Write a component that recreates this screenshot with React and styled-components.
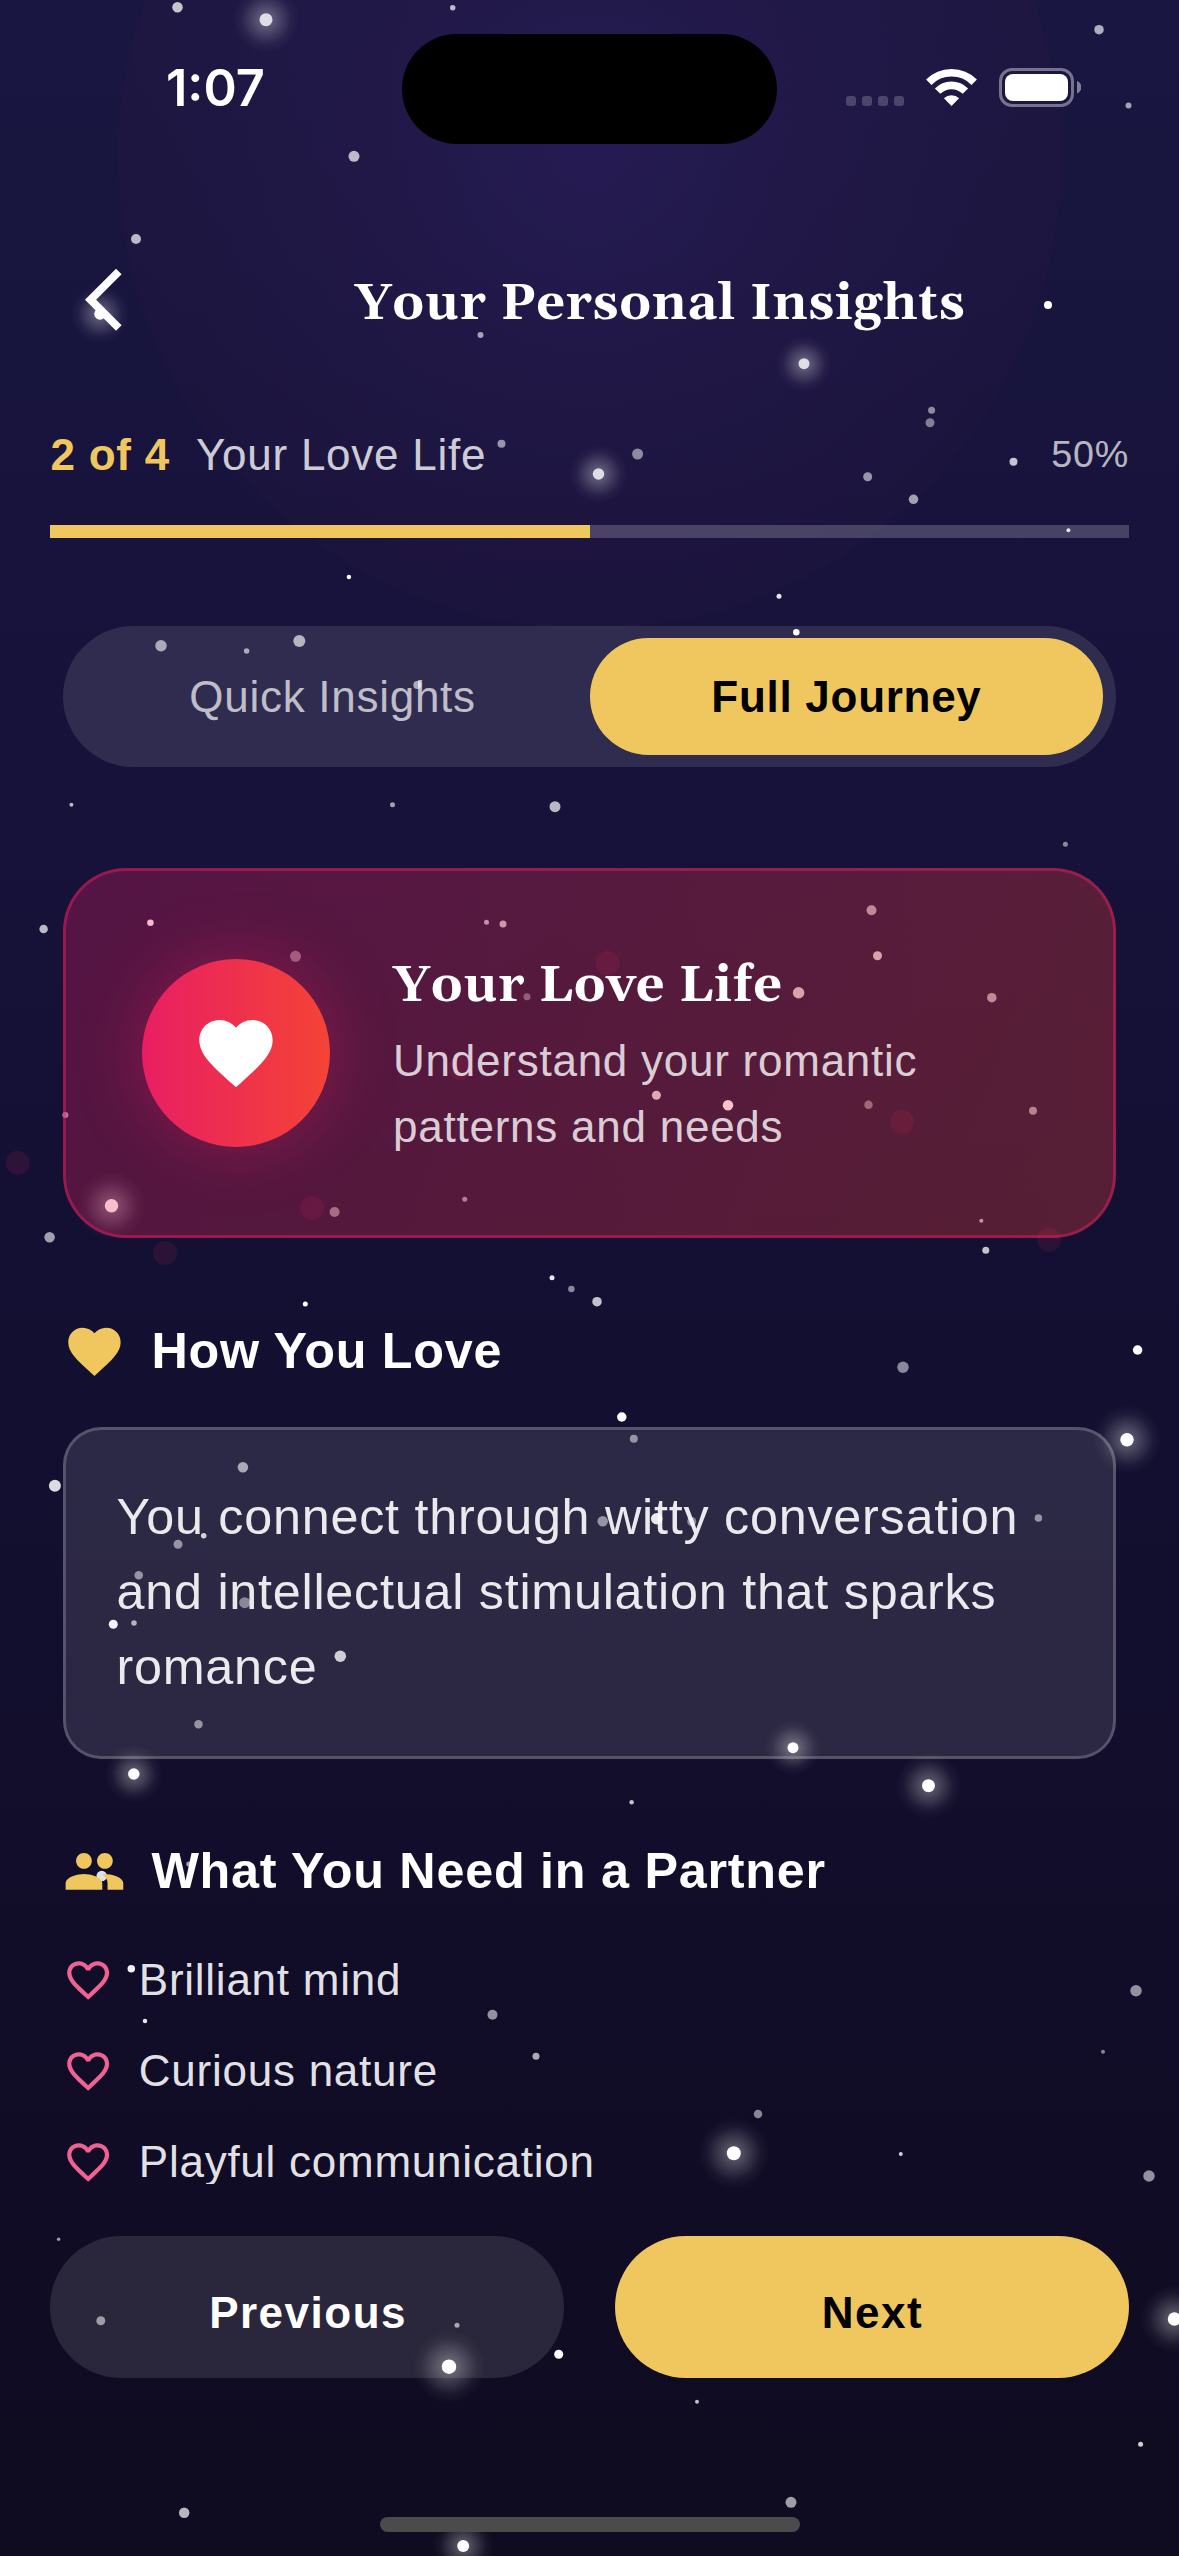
import React from "react";
import styled, { createGlobalStyle } from "styled-components";

const gold = "#f0c75e";
const sans = `"Liberation Sans", Arial, sans-serif`;
const serif = `Georgia, Gelasio, "Liberation Serif", serif`;

const GlobalStyle = createGlobalStyle`
  * { box-sizing: border-box; }
  html, body { margin: 0; padding: 0; background: #0f0b20; }
`;

const Screen = styled.div`
  position: relative;
  width: 1179px;
  height: 2556px;
  overflow: hidden;
  display: flex;
  flex-direction: column;
  font-family: ${sans};
  color: #fff;
  background:
    radial-gradient(circle 472px at 589.5px 158px, rgba(103, 58, 183, 0.16) 0%, rgba(115, 50, 140, 0.09) 50%, rgba(140, 45, 80, 0.035) 99.7%, transparent 100%),
    linear-gradient(180deg, #191641 0%, #16123a 30%, #120e2d 65%, #0f0b20 100%);
`;

const Sky = styled.svg`
  position: absolute;
  inset: 0;
  pointer-events: none;
`;

const Content = styled.div`
  position: relative;
  flex: 1;
  display: flex;
  flex-direction: column;
`;

const StatusBar = styled.div`
  height: 177px;
  padding: 34px 98px 0 166px;
  display: flex;
  align-items: flex-start;
  justify-content: space-between;
`;

const Clock = styled.div`
  width: 236px;
  padding-top: 23px;
  font-family: Inter, sans-serif;
  font-weight: 600;
  font-size: 50.5px;
  line-height: 62px;
  letter-spacing: 0;
`;

const Island = styled.div`
  width: 375px;
  height: 110px;
  border-radius: 55px;
  background: #000;
`;

const StatusIcons = styled.div`
  width: 236px;
  margin-left: 68px;
  padding-top: 34px;
  display: flex;
  align-items: flex-start;
`;

const Header = styled.div`
  height: 244px;
  padding-top: 1.5px;
  display: flex;
  align-items: center;
`;

const BackButton = styled.button`
  width: 141px;
  height: 76px;
  padding: 0 0 0 85px;
  border: 0;
  background: none;
  display: flex;
`;

const Title = styled.h1`
  flex: 1;
  margin: 8px 0 0;
  text-align: center;
  font-family: ${serif};
  font-weight: 700;
  font-size: 50.3px;
  line-height: 66px;
  letter-spacing: 0.75px;
`;

const ProgressRow = styled.div`
  height: 104px;
  padding: 8px 50px 0 50.5px;
  display: flex;
  align-items: flex-start;
  font-size: 44px;
  line-height: 51px;
  letter-spacing: 0.75px;
`;

const Step = styled.span`
  width: 145.5px;
  color: ${gold};
  font-weight: 700;
`;

const StepName = styled.span`
  flex: 1;
  color: rgba(255, 255, 255, 0.8);
`;

const Percent = styled.span`
  font-size: 37.7px;
  color: rgba(255, 255, 255, 0.7);
`;

const Track = styled.div`
  height: 12.6px;
  margin: 0 50.3px;
  background: rgba(255, 255, 255, 0.2);
`;

const Fill = styled.div`
  width: ${(p) => p.$value}%;
  height: 100%;
  background: ${gold};
`;

const Toggle = styled.div`
  height: 141.6px;
  margin: 88.2px 63px 0;
  padding: 12.6px;
  border-radius: 71px;
  background: rgba(255, 255, 255, 0.11);
  display: flex;
`;

const Segment = styled.button`
  flex: 1;
  border: 0;
  border-radius: 59px;
  font-family: ${sans};
  font-size: 44px;
  letter-spacing: 0.72px;
  padding: 0;
  background: ${(p) => (p.$active ? gold : "transparent")};
  color: ${(p) => (p.$active ? "#000" : "rgba(255, 255, 255, 0.7)")};
  font-weight: ${(p) => (p.$active ? 700 : 400)};
`;

const Hero = styled.section`
  height: 370px;
  margin: 100.6px 63px 0;
  padding: 0 75.5px;
  border: 3px solid rgba(233, 30, 99, 0.45);
  border-radius: 63px;
  background: linear-gradient(109.4deg, rgba(233, 30, 99, 0.3), rgba(244, 67, 54, 0.3)) border-box;
  display: flex;
  align-items: center;
  gap: 63px;
`;

const HeroBadge = styled.div`
  flex: none;
  width: 188.6px;
  height: 188.6px;
  border-radius: 50%;
  display: flex;
  align-items: center;
  justify-content: center;
  background: linear-gradient(90deg, #e91e63, #f44336);
  box-shadow: 0 0 63px 6px rgba(233, 30, 99, 0.3);
`;

const HeroText = styled.div`
  padding-top: 7px;
  display: flex;
  flex-direction: column;
`;

const HeroTitle = styled.h2`
  margin: 0;
  font-family: ${serif};
  font-weight: 700;
  font-size: 50.3px;
  line-height: 66px;
  letter-spacing: 0.75px;
`;

const HeroDescription = styled.p`
  width: 570px;
  margin: 9px 0 0;
  font-size: 44px;
  line-height: 66px;
  letter-spacing: 0.75px;
  color: rgba(255, 255, 255, 0.8);
`;

const Section = styled.section`
  margin: ${(p) => p.$top}px 63px 0;
`;

const SectionHead = styled.h3`
  margin: 0;
  height: 63px;
  display: flex;
  align-items: center;
  gap: 25.5px;
  font-weight: 700;
  font-size: 50.3px;
  line-height: 63px;
  letter-spacing: 0.75px;
`;

const HeadLabel = styled.span`
  padding-bottom: 2px;
`;

const Note = styled.p`
  height: 332px;
  margin: 44px 0 0;
  padding: 49px 50px 50px 50.5px;
  border: 3px solid rgba(255, 255, 255, 0.2);
  border-radius: 38px;
  background: rgba(255, 255, 255, 0.11);
  font-size: 50.3px;
  line-height: 75.2px;
  letter-spacing: 0.75px;
  color: rgba(255, 255, 255, 0.9);
`;

const NeedList = styled.ul`
  list-style: none;
  height: 237px;
  margin: 44.5px 0 0;
  padding: 0;
  overflow: hidden;
  display: flex;
  flex-direction: column;
  gap: 25px;
`;

const Need = styled.li`
  flex: none;
  height: 66px;
  display: flex;
  align-items: center;
  gap: 25.5px;
  font-size: 44px;
  line-height: 66px;
  letter-spacing: 0.75px;
  color: rgba(255, 255, 255, 0.9);
`;

const Footer = styled.div`
  margin-top: 51.3px;
  padding: 0 50.3px;
  display: flex;
  gap: 50.3px;
`;

const Action = styled.button`
  flex: 1;
  height: 142px;
  padding: 12px 0 0 1.5px;
  border: 0;
  border-radius: 71px;
  font-family: ${sans};
  font-weight: 700;
  font-size: 44px;
  letter-spacing: 1.5px;
  background: ${(p) => (p.$primary ? gold : "rgba(255, 255, 255, 0.11)")};
  color: ${(p) => (p.$primary ? "#000" : "#fff")};
`;

const HomeBar = styled.div`
  width: 420px;
  height: 15px;
  margin: auto auto 24px;
  border-radius: 7.5px;
  background: #4c4b4c;
`;

/* x, y, diameter, opacity, glowing */
const stars = [
  [177.5, 7.3, 10.5, 0.75], [266, 19.7, 13, 0.8, 1], [452.7, 7.7, 5.5, 0.7], [1099, 29.7, 9.5, 0.65],
  [1128.5, 105.5, 6, 0.6], [354, 156.3, 11, 0.7], [136, 239, 10, 0.7], [100, 314, 11.5, 1, 1],
  [1048, 305, 8, 1], [480.5, 335, 6, 0.6], [804, 363.7, 11, 0.8, 1], [931.6, 410.3, 7, 0.5],
  [930, 422.7, 9, 0.45], [501.5, 443.7, 8, 0.55], [637.6, 454, 11, 0.5], [598.5, 474, 11.5, 0.8, 1],
  [1013.5, 461.7, 8, 0.75], [867.7, 476.7, 9, 0.55], [913.5, 499.3, 9.5, 0.6], [1068.4, 530.3, 4, 0.85],
  [348.9, 577, 4.5, 1], [779, 596.3, 5, 0.9], [796.3, 632.3, 6.5, 1], [161, 645.7, 11.5, 0.6],
  [299.3, 641, 12, 0.65], [246.6, 651, 5.5, 0.6], [417.3, 685, 8, 0.6], [71.4, 804.7, 4, 0.7],
  [392.5, 804.7, 5, 0.6], [555, 806.7, 11, 0.7], [1065.4, 844.3, 5, 0.5], [43.6, 929, 8.5, 0.7],
  [150.4, 922.7, 6.5, 1], [486.5, 922.3, 5, 0.7], [503, 924, 7, 0.75], [871.5, 910.3, 10, 0.65],
  [877.5, 955.7, 9, 0.8], [295.5, 956.3, 11, 0.45], [798.6, 992.7, 11.5, 0.8], [991.8, 997.7, 9.5, 0.65],
  [527, 996.7, 7, 0.4], [656.4, 1095.3, 9, 0.85], [728, 1105.3, 10.5, 1], [868.5, 1104.7, 8.5, 0.45],
  [1033, 1110.7, 8, 0.6], [65.4, 1115, 6, 0.6], [111.5, 1205.7, 13.5, 1, 1], [334.6, 1212, 10, 0.5],
  [464.7, 1199.3, 5, 0.6], [981.3, 1220.7, 4, 0.7], [49.6, 1237.3, 10.5, 0.6], [985.8, 1250.3, 7, 0.75],
  [552, 1277.7, 5, 0.9], [571.4, 1289, 6.5, 0.5], [597, 1301.7, 9.5, 0.75], [305.3, 1304, 5, 1],
  [1137.6, 1350, 9.5, 1], [903, 1367.3, 11.5, 0.5], [621.8, 1417, 9.5, 1], [633.8, 1438.7, 8, 0.5],
  [1127, 1439.7, 13.5, 1, 1], [242.9, 1467.3, 10.5, 0.6], [54.9, 1485.7, 12, 0.85], [602.7, 1521.3, 10.5, 0.5],
  [656.7, 1518.7, 11.5, 0.9], [691.7, 1521.5, 9, 0.45], [1038.4, 1518, 7.5, 0.5], [203.7, 1535.7, 5.5, 0.8],
  [178, 1544.3, 9, 0.5], [138.7, 1575.3, 8.5, 0.5], [244.7, 1602.7, 11, 0.45], [113.3, 1624.3, 9, 0.95],
  [134, 1623, 5.5, 0.65], [340.3, 1656.3, 11.5, 0.78], [198.5, 1724.3, 8.5, 0.5], [793, 1747.7, 11, 1, 1],
  [133.8, 1774, 11.5, 1, 1], [928.5, 1785.7, 13, 1, 1], [631.6, 1802.3, 4.5, 0.75], [101.7, 1876, 10.5, 0.88],
  [188.7, 1864, 5, 0.6], [131.3, 1968.7, 7.5, 0.95], [145, 2021, 4.5, 0.9], [1136, 1990.7, 11.5, 0.55],
  [492.5, 2014.7, 10, 0.55], [536, 2056.3, 7, 0.65], [1103, 2051.7, 4, 0.5], [758, 2114, 8.5, 0.5],
  [733.8, 2153.3, 14, 1, 1], [900.8, 2154, 4, 0.8], [1149, 2176, 11.5, 0.55], [58.6, 2239.3, 3.5, 0.6],
  [100.8, 2320.7, 9, 0.55], [457, 2325.3, 5, 0.6], [449, 2366.7, 14.5, 1, 1], [558.7, 2354.3, 9, 1],
  [1174.5, 2319, 13.5, 1, 1], [697, 2401.7, 4, 0.75], [1140.6, 2444.3, 5, 0.8], [791, 2502.3, 11, 0.6],
  [184.2, 2512.7, 10.5, 0.7], [463.2, 2546, 12, 1, 1],
];

const embers = [
  [17.7, 1162.7], [165, 1253], [312, 1208], [607.5, 963], [460, 1068], [902, 1121.7], [1049, 1239.7],
];

function Starfield() {
  return (
    <Sky width="1179" height="2556" viewBox="0 0 1179 2556">
      <defs>
        <radialGradient id="glow">
          <stop offset="0" stopColor="#fff" stopOpacity="0.3" />
          <stop offset="0.25" stopColor="#fff" stopOpacity="0.26" />
          <stop offset="0.5" stopColor="#fff" stopOpacity="0.15" />
          <stop offset="0.75" stopColor="#fff" stopOpacity="0.045" />
          <stop offset="1" stopColor="#fff" stopOpacity="0" />
        </radialGradient>
      </defs>
      {embers.map(([x, y]) => (
        <circle key={`${x}-${y}`} cx={x} cy={y} r="12" fill="#e91e63" fillOpacity="0.12" />
      ))}
      {stars.map(([x, y, d, o, glow]) => (
        <g key={`${x}-${y}`}>
          {glow && <circle cx={x} cy={y} r={d * 2.55} fill="url(#glow)" />}
          <circle cx={x} cy={y} r={d / 2} fill="#fff" fillOpacity={o} />
        </g>
      ))}
    </Sky>
  );
}

const Signal = () => (
  <svg width="236" height="42" viewBox="0 0 236 42">
    {[0, 16, 32, 48].map((x) => (
      <rect key={x} x={x + 1} y="28" width="10" height="10" rx="3" fill="#fff" fillOpacity="0.2" />
    ))}
    <g fill="none" stroke="#fff" strokeWidth="7.6">
      <path d="M83.8 14.2 A32 32 0 0 1 129.2 14.2" />
      <path d="M92.6 23.2 A19.5 19.5 0 0 1 120.4 23.2" />
    </g>
    <path d="M106.5 38 L98.9 30.2 A11 11 0 0 1 114.1 30.2 Z" fill="#fff" />
    <rect x="155.5" y="1.5" width="72" height="36" rx="11.5" fill="none" stroke="#fff" strokeOpacity="0.4" strokeWidth="3" />
    <rect x="160" y="6" width="63" height="27" rx="8" fill="#fff" />
    <path d="M232 13 a6.6 6.6 0 0 1 0 12.4 Z" fill="#fff" fillOpacity="0.45" />
  </svg>
);

const HeartIcon = ({ size, color }) => (
  <svg width={size} height={size} viewBox="0 0 24 24" fill={color}>
    <path d="M12 21.35l-1.45-1.32C5.4 15.36 2 12.28 2 8.5 2 5.42 4.42 3 7.5 3c1.74 0 3.41.81 4.5 2.09C13.09 3.81 14.76 3 16.5 3 19.58 3 22 5.42 22 8.5c0 3.78-3.4 6.86-8.55 11.54L12 21.35z" />
  </svg>
);

const HeartOutline = () => (
  <svg width="50.3" height="50.3" viewBox="0 0 24 24" fill="#f06292">
    <path d="M16.5 3c-1.74 0-3.41.81-4.5 2.09C10.91 3.81 9.24 3 7.5 3 4.42 3 2 5.42 2 8.5c0 3.78 3.4 6.86 8.55 11.54L12 21.35l1.45-1.32C18.6 15.36 22 12.28 22 8.5 22 5.42 19.58 3 16.5 3zm-4.4 15.55l-.1.1-.1-.1C7.14 14.24 4 11.39 4 8.5 4 6.5 5.5 5 7.5 5c1.54 0 3.04.99 3.57 2.36h1.87C13.46 5.99 14.96 5 16.5 5c2 0 3.5 1.5 3.5 3.5 0 2.89-3.14 5.74-7.9 10.05z" />
  </svg>
);

const PeopleIcon = () => (
  <svg width="62.9" height="62.9" viewBox="0 0 24 24" fill={gold}>
    <path d="M16 11c1.66 0 2.99-1.34 2.99-3S17.66 5 16 5c-1.66 0-3 1.34-3 3s1.34 3 3 3zm-8 0c1.66 0 2.99-1.34 2.99-3S9.66 5 8 5C6.34 5 5 6.34 5 8s1.34 3 3 3zm0 2c-2.33 0-7 1.17-7 3.5V19h14v-2.500c0-2.330-4.670-3.500-7-3.500zm8 0c-.29 0-.62.02-.97.05 1.160.84 1.970 1.970 1.970 3.450V19h6v-2.500c0-2.330-4.670-3.500-7-3.500z" />
  </svg>
);

const BackIcon = () => (
  <svg width="37" height="76" viewBox="0 0 11.8 24.2" fill="#fff">
    <path d="M11.67 3.87L9.9 2.1 0 12l9.900 9.900 1.770-1.770L3.540 12z" />
  </svg>
);

export default function App() {
  return (
    <Screen>
      <GlobalStyle />
      <Starfield />
      <Content>
        <StatusBar>
          <Clock>1:07</Clock>
          <Island />
          <StatusIcons>
            <Signal />
          </StatusIcons>
        </StatusBar>
        <Header>
          <BackButton aria-label="Back">
            <BackIcon />
          </BackButton>
          <Title>Your Personal Insights</Title>
        </Header>
        <ProgressRow>
          <Step>2 of 4</Step>
          <StepName>Your Love Life</StepName>
          <Percent>50%</Percent>
        </ProgressRow>
        <Track>
          <Fill $value={50} />
        </Track>
        <Toggle>
          <Segment>Quick Insights</Segment>
          <Segment $active>Full Journey</Segment>
        </Toggle>
        <Hero>
          <HeroBadge>
            <HeartIcon size={88} color="#fff" />
          </HeroBadge>
          <HeroText>
            <HeroTitle>Your Love Life</HeroTitle>
            <HeroDescription>Understand your romantic patterns and needs</HeroDescription>
          </HeroText>
        </Hero>
        <Section $top={82}>
          <SectionHead>
            <HeartIcon size={62.9} color={gold} />
            <HeadLabel>How You Love</HeadLabel>
          </SectionHead>
          <Note>You connect through witty conversation and intellectual stimulation that sparks romance</Note>
        </Section>
        <Section $top={81}>
          <SectionHead>
            <PeopleIcon />
            <HeadLabel>What You Need in a Partner</HeadLabel>
          </SectionHead>
          <NeedList>
            {["Brilliant mind", "Curious nature", "Playful communication"].map((need) => (
              <Need key={need}>
                <HeartOutline />
                {need}
              </Need>
            ))}
          </NeedList>
        </Section>
        <Footer>
          <Action>Previous</Action>
          <Action $primary>Next</Action>
        </Footer>
        <HomeBar />
      </Content>
    </Screen>
  );
}
